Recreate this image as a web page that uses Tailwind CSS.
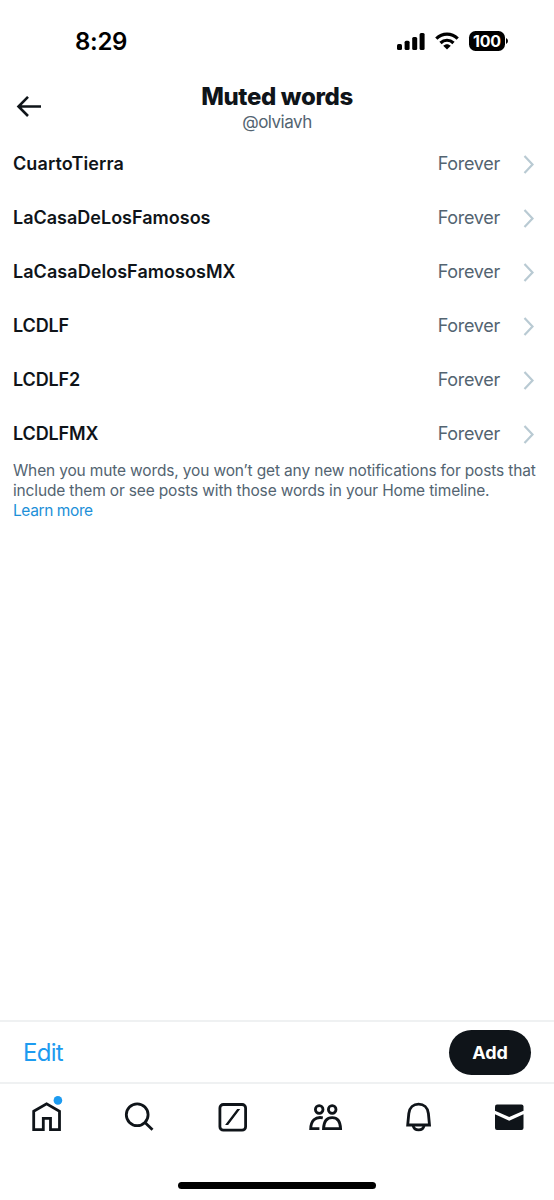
<!DOCTYPE html>
<html lang="en">
<head>
<meta charset="utf-8">
<meta name="viewport" content="width=device-width, initial-scale=1">
<title>Muted words</title>
<script src="https://cdn.jsdelivr.net/npm/@tailwindcss/browser@4"></script>
</head>
<body class="bg-white">
<div class="flex h-[1200px] w-[554px] flex-col overflow-hidden bg-white font-['Inter',sans-serif] text-[#0f1419]">
  <div class="flex h-[82px] shrink-0 items-center justify-between pr-[46px] pl-[75px] text-black">
    <span class="pt-[2px] text-[24px] leading-[30px] font-semibold tracking-[-0.3px]">8:29</span>
    <div class="flex items-center">
      <svg class="h-[18px] w-[28px]" viewBox="0 0 28 18"><rect x="0" y="12" width="5" height="6" rx="1.5"/><rect x="7.6" y="8.800" width="5" height="9.200" rx="1.5"/><rect x="15.2" y="5" width="5" height="13" rx="1.5"/><rect x="22.600" y="1" width="5" height="17" rx="1.5"/></svg>
      <svg class="ml-[10px] h-[18px] w-[24px]" viewBox="0 0 24 18" fill="none" stroke="#000" stroke-width="3.2"><path d="M1.3 6.6C7.5.5 16.500.5 22.700 6.600"/><path d="M5.500 11C9.300 7.300 14.700 7.300 18.500 11"/><path d="M8.200 13.700C10.500 11.600 13.500 11.600 15.800 13.700L12 17.600Z" fill="#000" stroke="none"/></svg>
      <div class="ml-[10px] flex h-[20px] w-[36px] items-center justify-center rounded-[6.5px] bg-black text-[16px] leading-none font-bold tracking-[-0.2px] text-white">100</div>
      <svg class="ml-px h-[8px] w-[2px]" viewBox="0 0 2 8"><path d="M0 1Q2 2 2 4T0 7Z"/></svg>
    </div>
  </div>
  <header class="grid h-[55px] shrink-0 grid-cols-[60px_1fr_60px]">
    <svg class="mt-[12px] ml-[16px] h-[24px] w-[26px]" viewBox="0 0 26 24" fill="none" stroke="#0f1419" stroke-width="2.600"><path d="M12 2.800 2.500 12.500 12 22M2.500 12.500H25"/></svg>
    <div class="flex flex-col items-center">
      <h1 class="h-[29px] text-[24px] leading-[29px] font-extrabold tracking-[-0.35px]">Muted words</h1>
      <p class="h-[22px] text-[17px] leading-[22px] tracking-[-0.5px] text-[#536471]">@olviavh</p>
    </div>
  </header>
  <main class="flex grow flex-col">
    <ul class="flex flex-col text-[18px] leading-[54px]">
      <li class="flex h-[54px] items-center pr-[19px] pl-[13px]"><span class="grow font-semibold tracking-[0.1px]">CuartoTierra</span><span class="tracking-[-0.3px] text-[#536471]">Forever</span><svg class="ml-[23px] h-[20px] w-[12px]" viewBox="0 0 12 20" fill="none" stroke="#b9cad3" stroke-width="2.200"><path d="m1.500 2 8 8.500-8 8.500"/></svg></li>
      <li class="flex h-[54px] items-center pr-[19px] pl-[13px]"><span class="grow font-semibold">LaCasaDeLosFamosos</span><span class="tracking-[-0.3px] text-[#536471]">Forever</span><svg class="ml-[23px] h-[20px] w-[12px]" viewBox="0 0 12 20" fill="none" stroke="#b9cad3" stroke-width="2.200"><path d="m1.500 2 8 8.500-8 8.500"/></svg></li>
      <li class="flex h-[54px] items-center pr-[19px] pl-[13px]"><span class="grow font-semibold tracking-[0.05px]">LaCasaDelosFamososMX</span><span class="tracking-[-0.3px] text-[#536471]">Forever</span><svg class="ml-[23px] h-[20px] w-[12px]" viewBox="0 0 12 20" fill="none" stroke="#b9cad3" stroke-width="2.200"><path d="m1.500 2 8 8.500-8 8.500"/></svg></li>
      <li class="flex h-[54px] items-center pr-[19px] pl-[13px]"><span class="grow font-semibold tracking-[-0.15px]">LCDLF</span><span class="tracking-[-0.3px] text-[#536471]">Forever</span><svg class="ml-[23px] h-[20px] w-[12px]" viewBox="0 0 12 20" fill="none" stroke="#b9cad3" stroke-width="2.200"><path d="m1.500 2 8 8.500-8 8.500"/></svg></li>
      <li class="flex h-[54px] items-center pr-[19px] pl-[13px]"><span class="grow font-semibold tracking-[-0.15px]">LCDLF2</span><span class="tracking-[-0.3px] text-[#536471]">Forever</span><svg class="ml-[23px] h-[20px] w-[12px]" viewBox="0 0 12 20" fill="none" stroke="#b9cad3" stroke-width="2.200"><path d="m1.500 2 8 8.500-8 8.500"/></svg></li>
      <li class="flex h-[54px] items-center pr-[19px] pl-[13px]"><span class="grow font-semibold tracking-[-0.15px]">LCDLFMX</span><span class="tracking-[-0.3px] text-[#536471]">Forever</span><svg class="ml-[23px] h-[20px] w-[12px]" viewBox="0 0 12 20" fill="none" stroke="#b9cad3" stroke-width="2.200"><path d="m1.500 2 8 8.500-8 8.500"/></svg></li>
    </ul>
    <div class="pl-[13px] text-[15.500px] leading-[20px] tracking-[-0.155px] whitespace-nowrap text-[#536471]">
      <p>When you mute words, you won’t get any new notifications for posts that</p>
      <p>include them or see posts with those words in your Home timeline.</p>
      <p class="tracking-[-0.4px] text-[#1d90d8]">Learn more</p>
    </div>
  </main>
  <div class="flex h-[62px] shrink-0 items-center justify-between border-t-2 border-[#eff1f2] pr-[23px] pl-[23px]">
    <span class="pt-[2px] text-[24px] leading-[30px] font-normal tracking-[-0.7px] text-[#1d9bf0]">Edit</span>
    <div class="flex h-[45px] w-[82px] items-center justify-center rounded-full bg-[#0f1419] text-[18px] font-bold text-white">Add</div>
  </div>
  <nav class="flex h-[118px] shrink-0 flex-col items-center border-t-2 border-[#eff1f2]">
    <div class="flex h-[98px] w-full gap-[57px] pt-[15px] pl-[29px]">
      <svg class="h-[36px] w-[36px] overflow-visible" viewBox="0 0 36 36" fill="none" stroke="#0f1419" stroke-width="2.800"><path d="M4.700 12.300 17.600 4.800 30.500 12.300V30.700H21.500V19.300H14.300V30.700H4.700Z"/><circle cx="28.900" cy="1.400" r="4.300" fill="#1d9bf0" stroke="none"/></svg>
      <svg class="h-[36px] w-[36px]" viewBox="0 0 36 36" fill="none" stroke="#0f1419" stroke-width="2.800"><circle cx="15.200" cy="15.800" r="10.900"/><path d="m22.700 23.300 7.800 7.500"/></svg>
      <svg class="h-[36px] w-[36px]" viewBox="0 0 36 36" fill="none" stroke="#0f1419" stroke-width="2.800"><rect x="4.900" y="5.500" width="25.700" height="25.700" rx="3.500"/><path d="M11.300 25.500H12.800L24 10.700H22.500Z" fill="#0f1419" stroke-width="1.200"/></svg>
      <svg class="h-[36px] w-[36px]" viewBox="0 0 36 36" fill="none" stroke="#0f1419" stroke-width="2.800"><circle cx="11.200" cy="10.500" r="3.800"/><circle cx="24.200" cy="10.500" r="3.800"/><path d="M14.800 18.800C7 17.300 3 22 2.700 29.700H11.400M15.500 29.700C15.800 22.500 19 18.600 24.200 18.600S32.300 22.500 32.600 29.700Z"/></svg>
      <svg class="h-[36px] w-[36px]" viewBox="0 0 36 36" fill="none" stroke="#0f1419" stroke-width="2.800"><path d="M6.700 26 7.800 14.500C8.500 8.500 12.500 5.200 17.600 5.200S26.700 8.500 27.400 14.500L28.500 26Z"/><path d="M12.100 26.500C12.700 29.600 14.800 30.900 17.600 30.900S22.500 29.600 23.100 26.500"/></svg>
      <svg class="h-[36px] w-[36px]" viewBox="0 0 36 36" fill="#0f1419"><path d="M1 11.800V7.500Q1 5.500 3 5.500H27.500Q29.500 5.500 29.500 7.500V11.800L15.200 18Z"/><path d="M1 15.300 15.200 21.700 29.500 15.300V29Q29.500 31 27.500 31H3Q1 31 1 29Z"/></svg>
    </div>
    <div class="h-[7px] w-[198px] shrink-0 rounded-full bg-black"></div>
  </nav>
</div>
</body>
</html>
